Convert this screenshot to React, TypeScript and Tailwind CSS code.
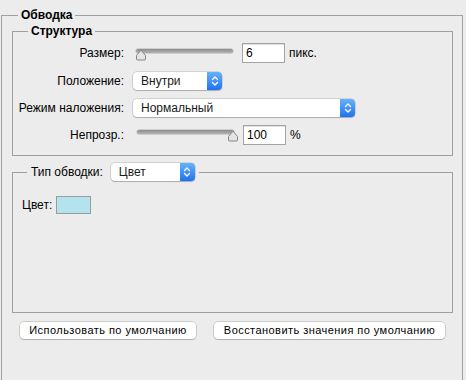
import React from 'react';

const Chevrons: React.FC = () => (
  <svg width="8" height="12" viewBox="0 0 8 12" fill="none">
    <path d="M1.5 4.5 L4 2 L6.5 4.5" stroke="white" strokeWidth="1.3" strokeLinecap="round" strokeLinejoin="round" />
    <path d="M1.5 7.5 L4 10 L6.5 7.5" stroke="white" strokeWidth="1.3" strokeLinecap="round" strokeLinejoin="round" />
  </svg>
);

const Select: React.FC<{ value: string; width: string }> = ({ value, width }) => (
  <div
    className={`${width} h-[18px] flex items-stretch bg-white rounded-[4px] shadow-[0_0_0_0.5px_rgba(0,0,0,0.22),0_1px_1px_rgba(0,0,0,0.18)]`}
  >
    <span className="flex-1 pl-[8px] text-[12px] leading-[18px] text-[#1a1a1a]">{value}</span>
    <span className="w-[15px] flex items-center justify-center rounded-r-[4px] bg-gradient-to-b from-[#68b1fa] to-[#1d72f1]">
      <Chevrons />
    </span>
  </div>
);

// thumb points up, sits on the track
const Slider: React.FC<{ pos: 'start' | 'end' }> = ({ pos }) => (
  <div className="relative w-[98px] h-[12px]">
    <div className="absolute left-[1px] right-0 top-[0px] h-[4px] rounded-full bg-gradient-to-b from-[#8d8d8d] to-[#b4b4b4] shadow-[0_0_0_0.5px_rgba(0,0,0,0.25)]" />
    <svg
      className={`absolute top-[0px] ${pos === 'start' ? 'left-0' : 'right-[-5px]'}`}
      width="12"
      height="12"
      viewBox="0 0 12 12"
    >
      <path
        d="M1.5 10 L1.5 6.5 L6 1.2 L10.5 6.5 L10.5 10 Q10.5 11 9.5 11 L2.5 11 Q1.5 11 1.5 10 Z"
        fill="#e4e4e4"
        stroke="#858585"
        strokeWidth="1"
      />
    </svg>
  </div>
);

const NumberBox: React.FC<{ value: string }> = ({ value }) => (
  <div className="w-[43px] h-[20px] bg-white border border-[#a3a3a3] shadow-[inset_0_1px_0_rgba(0,0,0,0.12)] pl-[3px] text-[12px] leading-[18px] text-black">
    {value}
  </div>
);

const Label: React.FC<{ children: React.ReactNode }> = ({ children }) => (
  <div className="w-[111px] text-right text-[12px] leading-[14px] text-black">{children}</div>
);

const Button: React.FC<{ children: React.ReactNode; width: string }> = ({ children, width }) => (
  <button
    className={`${width} h-[17px] bg-white rounded-[4px] shadow-[0_0_0_0.5px_rgba(0,0,0,0.25),0_1px_1px_rgba(0,0,0,0.15)] text-[11px] tracking-[0.45px] leading-[17px] text-black text-center`}
  >
    {children}
  </button>
);

export default function App() {
  return (
    <div className="w-[466px] h-[380px] overflow-hidden bg-[#ececec] font-['Liberation_Sans',Arial,sans-serif] text-black">
      <fieldset className="ml-[1px] mt-[8px] w-[462px] border border-[#a0a0a0] pb-[80px]">
        <legend className="ml-[16px] px-[3px] text-[12px] leading-[14px] font-bold">Обводка</legend>

        {/* Структура */}
        <fieldset className="ml-[10px] mt-[2px] w-[441px] border border-[#a0a0a0] pt-[5px] pb-[10px]">
          <legend className="ml-[15px] px-[3px] text-[12px] leading-[14px] font-bold">Структура</legend>

          <div className="flex items-center h-[20px]">
            <Label>Размер:</Label>
            <div className="ml-[11px] mt-[4px]">
              <Slider pos="start" />
            </div>
            <div className="ml-[9px]">
              <NumberBox value="6" />
            </div>
            <span className="ml-[4px] text-[12px]">пикс.</span>
          </div>

          <div className="flex items-center h-[20px] mt-[8px]">
            <Label>Положение:</Label>
            <div className="ml-[9px]">
              <Select value="Внутри" width="w-[89px]" />
            </div>
          </div>

          <div className="flex items-center h-[20px] mt-[7px]">
            <Label>Режим наложения:</Label>
            <div className="ml-[9px]">
              <Select value="Нормальный" width="w-[222px]" />
            </div>
          </div>

          <div className="flex items-center h-[20px] mt-[7px]">
            <Label>Непрозр.:</Label>
            <div className="ml-[12px] mt-[2px]">
              <Slider pos="end" />
            </div>
            <div className="ml-[9px]">
              <NumberBox value="100" />
            </div>
            <span className="ml-[4px] text-[12px]">%</span>
          </div>
        </fieldset>

        {/* Тип обводки */}
        <fieldset className="ml-[10px] mt-[7px] w-[441px] border border-[#a0a0a0] pt-[15px] pb-[98px]">
          <legend className="ml-[14px] px-[4px] h-[18px] flex items-center gap-[8px]">
            <span className="text-[12px] leading-[14px]">Тип обводки:</span>
            <Select value="Цвет" width="w-[84px]" />
          </legend>

          <div className="flex items-center pl-[9px]">
            <span className="text-[12px] leading-[14px]">Цвет:</span>
            <div className="ml-[4px] w-[35px] h-[18px] bg-[#b3e3ef] border border-[#9c9c9c]" />
          </div>
        </fieldset>

        <div className="flex mt-[9px] ml-[18px] gap-[18px]">
          <Button width="w-[176px]">Использовать по умолчанию</Button>
          <Button width="w-[231px]">Восстановить значения по умолчанию</Button>
        </div>
      </fieldset>
    </div>
  );
}
